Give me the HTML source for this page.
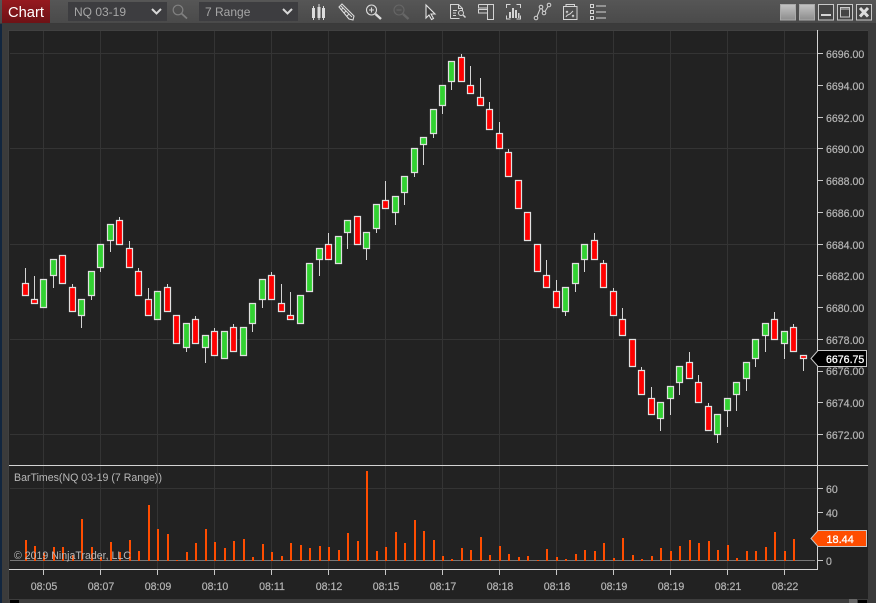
<!DOCTYPE html>
<html><head><meta charset="utf-8"><title>Chart</title>
<style>
html,body{margin:0;padding:0;background:#3b3b3b;width:876px;height:603px;overflow:hidden}
svg{display:block}
text{font-family:"Liberation Sans",Arial,sans-serif}
.b{stroke:#b4b4b4;stroke-width:.2px}
.w{stroke:#fff;stroke-width:.3px}
</style></head><body>
<svg width="876" height="603" viewBox="0 0 876 603" xmlns="http://www.w3.org/2000/svg">
<defs>
<linearGradient id="tb" x1="0" y1="0" x2="0" y2="1"><stop offset="0" stop-color="#565656"/><stop offset="1" stop-color="#4a4a4a"/></linearGradient>
<linearGradient id="rd" x1="0" y1="0" x2="0" y2="1"><stop offset="0" stop-color="#96191f"/><stop offset="1" stop-color="#6e1216"/></linearGradient>
<linearGradient id="gb" x1="0" y1="0" x2="0" y2="1"><stop offset="0" stop-color="#c4c4c4"/><stop offset="1" stop-color="#8c8c8c"/></linearGradient>
</defs>
<rect width="876" height="603" fill="#3b3b3b"/>
<rect x="0" y="0" width="2" height="603" fill="#12263f"/>
<rect width="876" height="23" fill="url(#tb)"/>
<rect y="23" width="876" height="1" fill="#3a3a3a"/>
<rect x="2" y="0" width="48" height="23" fill="url(#rd)"/>
<text x="8" y="17" font-size="14.7" fill="#fff">Chart</text>

<rect x="68" y="2" width="99" height="19" fill="#3d3d40"/>
<text x="74" y="16" font-size="12" fill="#a6a6a6">NQ 03-19</text>
<path d="M152 9l4.500 4.500 4.500-4.500" fill="none" stroke="#d8d8d8" stroke-width="2"/>
<rect x="199" y="2" width="99" height="19" fill="#3d3d40"/>
<text x="205" y="16" font-size="12" fill="#a6a6a6">7 Range</text>
<path d="M283 9l4.500 4.500 4.500-4.500" fill="none" stroke="#d8d8d8" stroke-width="2"/>
<g fill="none" stroke="#808080" stroke-width="1.200"><circle cx="178" cy="10" r="4.800"/><path d="M181.500 13.500l5.500 5" stroke-width="1.800"/></g>

<!-- toolbar icons -->
<g fill="#dcdcdc"><rect x="312" y="8" width="3" height="10"/><rect x="313" y="6" width="1" height="14"/><rect x="317.500" y="7" width="3" height="11"/><rect x="318.500" y="4" width="1" height="16"/><rect x="322" y="8" width="3" height="10"/><rect x="323" y="6" width="1" height="14"/></g>
<g fill="none" stroke="#dcdcdc"><path d="M339 7l3-3 12 12-1 4-4-1z" stroke-width="1.100"/><path d="M341 6l11 11M343 8l-2 2M346 11l-2 2M349 14l-2 2" stroke-width="1"/></g>
<g fill="none" stroke="#dcdcdc" stroke-width="1.100"><circle cx="371.500" cy="10" r="5"/><path d="M369 10h5M371.500 7.500v5"/><path d="M375.500 14l5.500 5" stroke-width="2.400"/></g>
<g fill="none" stroke="#666" stroke-width="1.100"><circle cx="399" cy="10" r="5"/><path d="M396.500 10h5"/><path d="M403 14l5.500 5" stroke-width="2.400"/></g>
<path d="M426 5v13l3-3 2.500 4.500 2-1-2.500-4.500h4z" fill="#3f3f3f" stroke="#e4e4e4" stroke-width="1.100"/>
<g fill="none" stroke="#d4d4d4" stroke-width="1"><path d="M450.500 18.500V4.500h8l4 4v2M458.500 4.500v4h4M450.500 18.500h9M453 10.500h4M453 13h3M453 15.500h3"/><circle cx="461" cy="13" r="2.500"/><path d="M463 15l2.500 2.500" stroke-width="1.500"/></g>
<g fill="none" stroke="#d4d4d4" stroke-width="1"><path d="M478.500 4.500h15v15h-6v-15M478.500 4.500h9M478.500 4.500v3.500h9M478.500 9.500h9v3.500h-9z"/></g>
<g fill="none" stroke="#d4d4d4" stroke-width="1"><path d="M506.500 8V4.500h4M516.500 4.500h4V8M506.500 15.500v3.500h4M516.500 19h4v-3.500"/></g>
<g fill="#d4d4d4"><rect x="509" y="12" width="2" height="6"/><rect x="512" y="8" width="2" height="10"/><rect x="515" y="10" width="2" height="8"/><rect x="518" y="13" width="1.500" height="5"/></g>
<g fill="none" stroke="#d4d4d4" stroke-width="1"><circle cx="536" cy="18" r="1.800"/><circle cx="541" cy="7" r="1.800"/><circle cx="544" cy="13" r="1.800"/><circle cx="549" cy="5" r="1.800"/><path d="M537 16.500l3.300-8M541.800 8.600l1.500 3M545 11.500l3-5"/></g>
<g fill="none" stroke="#d4d4d4" stroke-width="1"><path d="M563.500 6.500h13.500v13h-13.500zM566 6.500v-2h8.500v2M566 11l2 2M568 11l-2 2M572 15l2 2M574 15l-2 2M566 17c1-3 4-2 5-4l2-2"/></g>
<g fill="none" stroke="#d4d4d4" stroke-width="1"><path d="M590.500 4.500h3v3h-3zM590.500 10.500h3v3h-3zM590.500 16.500h3v3h-3zM596 6h10M596 12h10M596 18h10"/></g>

<!-- window buttons -->
<rect x="780.500" y="4.500" width="15" height="15.500" fill="url(#gb)" stroke="#aaa"/>
<rect x="799.500" y="4.500" width="15" height="15.500" fill="url(#gb)" stroke="#aaa"/>
<rect x="818.500" y="4.500" width="15" height="15.500" fill="#444" stroke="#c8c8c8"/>
<rect x="821" y="14" width="10" height="2" fill="#d4d4d4"/>
<rect x="837.500" y="4.500" width="15" height="15.500" fill="#444" stroke="#c8c8c8"/>
<path d="M840.500 7.500h9v9.500h-9zM840.500 9h9" fill="none" stroke="#c8c8c8" stroke-width="1"/>
<rect x="856.500" y="4.500" width="15" height="15.500" fill="#444" stroke="#c8c8c8"/>
<path d="M860 8l8 8.500M868 8l-8 8.500" stroke="#dcdcdc" stroke-width="3" fill="none"/>

<!-- panel -->
<rect x="8" y="30" width="860" height="569" fill="#222"/>
<path d="M8.500 30v569M8 30.500h860" stroke="#414141" fill="none"/>
<g stroke="#343434" stroke-width="1" fill="none">
<path d="M43.500 31V569M100.500 31V569M157.500 31V569M214.500 31V569M271.500 31V569M328.500 31V569M385.500 31V569M442.500 31V569M499.500 31V569M556.500 31V569M613.500 31V569M670.500 31V569M727.500 31V569M784.500 31V569"/>
<path d="M10 53.500H817M10 148.500H817M10 244.500H817M10 339.500H817M10 434.500H817M10 488.500H817"/>
</g>
<path d="M10 560.500H815" stroke="#777" fill="none"/>

<!-- volume -->
<path fill="none" stroke="#ff4d00" stroke-width="2" d="M26 561V540M35 561V546M44 561V553M54 561V547M63 561V547M73 561V555M82 561V519M92 561V547M101 561V557M111 561V542M120 561V552M130 561V540M139 561V551M149 561V505M158 561V529M168 561V534M177 561V560M187 561V552M196 561V543M206 561V529M215 561V542M225 561V548M234 561V541M244 561V539M253 561V557M263 561V544M272 561V552M282 561V556M291 561V543M301 561V545M310 561V548M320 561V546M329 561V547M339 561V550M348 561V533M358 561V541M367 561V471M377 561V551M386 561V547M396 561V532M405 561V543M415 561V520M424 561V531M434 561V540M443 561V556M452 561V559M462 561V548M471 561V550M481 561V537M490 561V555M500 561V546M509 561V554M519 561V557M528 561V556M538 561V560M547 561V549M557 561V557M566 561V559M576 561V554M585 561V550M595 561V551M604 561V543M614 561V558M623 561V538M633 561V555M642 561V559M652 561V556M661 561V548M671 561V551M680 561V546M690 561V540M699 561V543M709 561V541M718 561V550M728 561V545M737 561V558M747 561V551M756 561V551M766 561V547M775 561V532M785 561V551M794 561V539"/>

<!-- wicks -->
<path fill="none" stroke="#d4d4d4" stroke-width="1" d="M25.500 268V283M34.500 276V299M72.500 284V287M119.500 217V220M129.500 241V248M138.500 268V271M148.500 288V299M167.500 284V287M195.500 316V319M214.500 328V331M233.500 324V327M271.500 272V275M281.500 284V303M290.500 292V315M328.500 233V244M385.500 181V200M461.500 54V57M470.500 66V85M480.500 78V97M489.500 102V109M499.500 122V133M508.500 149V152M546.500 260V275M556.500 280V291M594.500 233V240M603.500 260V263M613.500 288V291M622.500 308V319M641.500 367V370M651.500 387V398M689.500 352V362M698.500 375V382M708.500 403V406M774.500 312V319M793.500 324V327M53.500 276V288M81.500 316V328M91.500 296V300M100.500 268V272M110.500 241V252M186.500 348V352M205.500 348V363M252.500 324V332M262.500 300V308M319.500 260V276M347.500 233V249M366.500 249V260M376.500 229V233M395.500 213V225M404.500 193V205M414.500 173V177M423.500 145V165M433.500 134V138M442.500 106V114M451.500 82V90M565.500 312V316M575.500 284V292M584.500 260V272M660.500 419V431M670.500 399V415M679.500 383V395M717.500 435V443M727.500 411V427M736.500 395V411M746.500 379V391M755.500 359V367M765.500 336V352M784.500 344V359M803.500 359V371"/>

<!-- red bodies -->
<path fill="#ff0000" stroke="#e0e0e0" stroke-width="1.200" d="M22.500 283.500h6v12h-6zM31.500 299.500h6v4h-6zM59.500 255.500h6v28h-6zM69.500 287.500h6v24h-6zM116.500 220.500h6v24h-6zM126.500 248.500h6v19h-6zM135.500 271.500h6v24h-6zM145.500 299.500h6v16h-6zM164.500 287.500h6v24h-6zM173.500 315.500h6v28h-6zM192.500 319.500h6v24h-6zM211.500 331.500h6v24h-6zM230.500 327.500h6v24h-6zM268.500 275.500h6v24h-6zM278.500 303.500h6v8h-6zM287.500 315.500h6v4h-6zM325.500 244.500h6v15h-6zM354.500 216.500h6v28h-6zM382.500 200.500h6v8h-6zM458.500 57.500h6v24h-6zM467.500 85.500h6v8h-6zM477.500 97.500h6v8h-6zM486.500 109.500h6v20h-6zM496.500 133.500h6v15h-6zM505.500 152.500h6v24h-6zM515.500 180.500h6v28h-6zM524.500 212.500h6v28h-6zM534.500 244.500h6v27h-6zM543.500 275.500h6v12h-6zM553.500 291.500h6v16h-6zM591.500 240.500h6v19h-6zM600.500 263.500h6v24h-6zM610.500 291.500h6v24h-6zM619.500 319.500h6v16h-6zM629.500 339.500h6v27h-6zM638.500 370.500h6v24h-6zM648.500 398.500h6v16h-6zM686.500 362.500h6v16h-6zM695.500 382.500h6v20h-6zM705.500 406.500h6v24h-6zM771.500 319.500h6v20h-6zM790.500 327.500h6v24h-6zM800.500 355.500h6v3h-6z"/>

<!-- green bodies -->
<path fill="#32d232" stroke="#e0e0e0" stroke-width="1.200" d="M40.500 279.500h6v28h-6zM50.500 259.500h6v16h-6zM78.500 299.500h6v16h-6zM88.500 271.500h6v24h-6zM97.500 244.500h6v23h-6zM107.500 224.500h6v16h-6zM154.500 291.500h6v28h-6zM183.500 323.500h6v24h-6zM202.500 335.500h6v12h-6zM221.500 331.500h6v27h-6zM240.500 327.500h6v28h-6zM249.500 303.500h6v20h-6zM259.500 279.500h6v20h-6zM297.500 295.500h6v28h-6zM306.500 263.500h6v28h-6zM316.500 248.500h6v11h-6zM335.500 236.500h6v27h-6zM344.500 220.500h6v12h-6zM363.500 232.500h6v16h-6zM373.500 204.500h6v24h-6zM392.500 196.500h6v16h-6zM401.500 176.500h6v16h-6zM411.500 148.500h6v24h-6zM420.500 137.500h6v7h-6zM430.500 109.500h6v24h-6zM439.500 85.500h6v20h-6zM448.500 61.500h6v20h-6zM562.500 287.500h6v24h-6zM572.500 263.500h6v20h-6zM581.500 244.500h6v15h-6zM657.500 402.500h6v16h-6zM667.500 386.500h6v12h-6zM676.500 366.500h6v16h-6zM714.500 414.500h6v20h-6zM724.500 398.500h6v12h-6zM733.500 382.500h6v12h-6zM743.500 362.500h6v16h-6zM752.500 339.500h6v19h-6zM762.500 323.500h6v12h-6zM781.500 331.500h6v12h-6z"/>

<!-- axes -->
<path d="M817.500 30V569.500H9M9 465.500H868" fill="none" stroke="#d4d4d4" stroke-width="1"/>
<path d="M818 53.500h5M818 85.500h5M818 117.500h5M818 148.500h5M818 180.500h5M818 212.500h5M818 244.500h5M818 275.500h5M818 307.500h5M818 339.500h5M818 371.500h5M818 402.500h5M818 434.500h5M818 488.500h5M818 512.500h5M818 560.500h5M43.500 570v5M100.500 570v5M157.500 570v5M214.500 570v5M271.500 570v5M328.500 570v5M385.500 570v5M442.500 570v5M499.500 570v5M556.500 570v5M613.500 570v5M670.500 570v5M727.500 570v5M784.500 570v5" fill="none" stroke="#c8c8c8" stroke-width="1"/>

<g font-size="10.600" fill="#b4b4b4" class="b">
<text x="826" y="58">6696.00</text>
<text x="826" y="90">6694.00</text>
<text x="826" y="122">6692.00</text>
<text x="826" y="153">6690.00</text>
<text x="826" y="185">6688.00</text>
<text x="826" y="217">6686.00</text>
<text x="826" y="249">6684.00</text>
<text x="826" y="280">6682.00</text>
<text x="826" y="312">6680.00</text>
<text x="826" y="344">6678.00</text>
<text x="826" y="375">6676.00</text>
<text x="826" y="407">6674.00</text>
<text x="826" y="439">6672.00</text>
<text x="826" y="493">60</text>
<text x="826" y="517">40</text>
<text x="826" y="565">0</text>
</g>
<g font-size="10.600" fill="#b4b4b4" text-anchor="middle" class="b">
<text x="44" y="590">08:05</text>
<text x="101" y="590">08:07</text>
<text x="158" y="590">08:09</text>
<text x="215" y="590">08:10</text>
<text x="272" y="590">08:11</text>
<text x="329" y="590">08:12</text>
<text x="386" y="590">08:15</text>
<text x="443" y="590">08:17</text>
<text x="500" y="590">08:18</text>
<text x="557" y="590">08:18</text>
<text x="614" y="590">08:19</text>
<text x="671" y="590">08:19</text>
<text x="728" y="590">08:21</text>
<text x="785" y="590">08:22</text>
</g>
<text x="14" y="481" font-size="10.600" fill="#b8b8b8">BarTimes(NQ 03-19 (7 Range))</text>
<text x="14" y="559" font-size="10.600" fill="#b8b8b8">© 2019 NinjaTrader, LLC</text>

<!-- price flags -->
<path d="M811 358.500l7-8H866.500V366.500H818z" fill="#000" stroke="#c8c8c8" stroke-width="1"/>
<text x="826" y="363" font-size="10.600" fill="#fff" class="w">6676.75</text>
<path d="M811 538.500l7-8H866.500V546.500H818z" fill="#ff4d00" stroke="#c8c8c8" stroke-width="1"/>
<text x="826.500" y="543" font-size="10.900" fill="#fff" class="w">18.44</text>

<!-- bottom scroll -->
<rect x="8" y="599" width="860" height="4" fill="#3d3d3d"/>
<rect x="10" y="600" width="9" height="3" fill="#000"/>
<rect x="849" y="599" width="8" height="4" fill="#666"/>
<rect x="858" y="600" width="9" height="3" fill="#000"/>
</svg>
</body></html>
